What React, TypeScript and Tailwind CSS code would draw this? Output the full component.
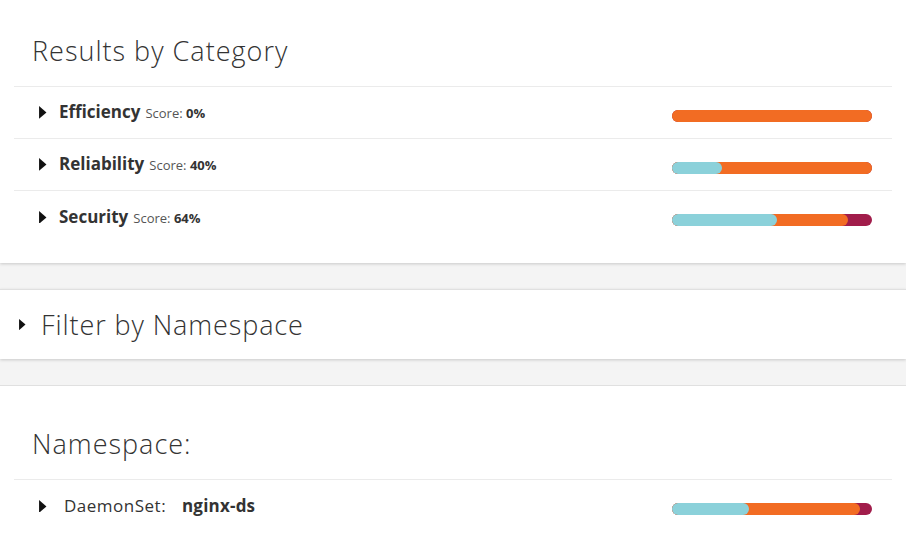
import React from "react";

type Bar = { cyan: number; orange: number };

function StackBar({ cyan, orange }: Bar) {
  return (
    <div className="grid w-[200px] h-[12px]">
      <div className="col-start-1 row-start-1 rounded-full bg-[#a11d4b]" />
      {orange > 0 && (
        <div
          className="col-start-1 row-start-1 rounded-full bg-[#f26c23]"
          style={{ width: orange }}
        />
      )}
      {cyan > 0 && (
        <div
          className="col-start-1 row-start-1 rounded-full bg-[#8bd1da]"
          style={{ width: cyan }}
        />
      )}
    </div>
  );
}

function Caret({ size = 8 }: { size?: number }) {
  return (
    <svg width={size} height={size * 1.6} viewBox="0 0 8 13" className="shrink-0">
      <path d="M0 0 L7.5 6.5 L0 13 Z" fill="#111" />
    </svg>
  );
}

function CategoryRow({ name, score, bar, last }: { name: string; score: string; bar: Bar; last?: boolean }) {
  return (
    <div className={`flex items-center h-[52px] pl-[25px] pr-[20px] ${last ? "" : "border-b border-[#ebebeb]"}`}>
      <Caret />
      <div className="ml-[12px] flex items-baseline gap-[5px] -mt-[1px]">
        <span className="text-[17px] font-bold text-[#333]">{name}</span>
        <span className="text-[13px] text-[#555]">
          Score: <span className="font-bold text-[#333]">{score}</span>
        </span>
      </div>
      <div className="ml-auto mt-[6px]">
        <StackBar {...bar} />
      </div>
    </div>
  );
}

export default function App() {
  return (
    <div
      className="min-h-[550px] bg-[#f4f4f4] w-[906px] overflow-hidden"
      style={{ fontFamily: "'Open Sans', 'Noto Sans', sans-serif" }}
    >
      {/* Card 1 */}
      <div className="bg-white px-[14px] shadow-[0_1px_3px_rgba(0,0,0,0.18)] h-[263px]">
        <div className="h-[87px] border-b border-[#ebebeb] pl-[18px] pt-[34px]">
          <h2 className="text-[27px] leading-[34px] font-light tracking-[1px] text-[#333]">Results by Category</h2>
        </div>
        <CategoryRow name="Efficiency" score="0%" bar={{ cyan: 0, orange: 200 }} />
        <CategoryRow name="Reliability" score="40%" bar={{ cyan: 50, orange: 200 }} />
        <CategoryRow name="Security" score="64%" bar={{ cyan: 105, orange: 176 }} last />
      </div>

      {/* Card 2 */}
      <div className="mt-[26px] bg-white border-t border-[#e0e0e0] shadow-[0_1px_3px_rgba(0,0,0,0.18)] h-[70px] flex items-center pl-[19px]">
        <Caret size={7} />
        <span className="ml-[15px] text-[27px] leading-[34px] font-light tracking-[0.9px] text-[#333]">Filter by Namespace</span>
      </div>

      {/* Card 3 */}
      <div className="mt-[26px] bg-white border-t border-[#e0e0e0] px-[14px] h-[170px]">
        <div className="h-[94px] border-b border-[#ebebeb] pl-[18px] pt-[41px]">
          <h2 className="text-[27px] leading-[34px] font-light tracking-[1px] text-[#333]">Namespace:</h2>
        </div>
        <div className="flex items-center h-[52px] pl-[25px] pr-[20px]">
          <Caret />
          <div className="ml-[17px] flex items-baseline">
            <span className="text-[17px] text-[#333] w-[118px] tracking-[0.5px]">DaemonSet:</span>
            <span className="text-[17px] font-bold text-[#333] tracking-[0.2px]">nginx-ds</span>
          </div>
          <div className="ml-auto mt-[6px]">
            <StackBar cyan={77} orange={188} />
          </div>
        </div>
      </div>
    </div>
  );
}
